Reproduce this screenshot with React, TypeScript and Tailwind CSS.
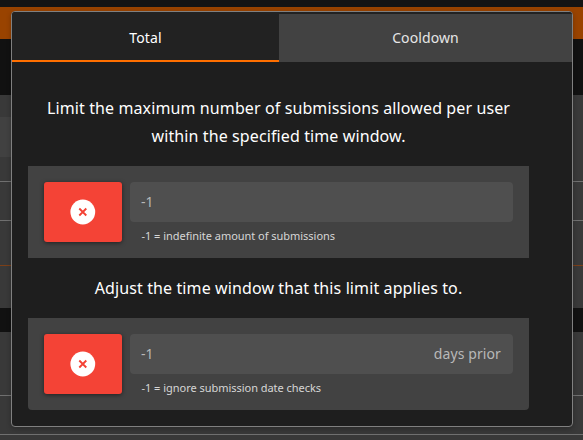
const stripes = [
  'h-[7px] bg-[#141414]',
  'h-8 bg-[#994300]',
  'h-14 bg-[#111111]',
  'h-[22px] bg-[#393939]',
  'h-10 bg-gradient-to-r from-[#414141] from-50% to-[#393939] to-50%',
  'h-6 bg-[#393939]',
  'h-px bg-[#707070]',
  'h-[38px] bg-[#393939]',
  'h-px bg-[#707070]',
  'h-11 bg-[#393939]',
  'h-px bg-[#7b3f18]',
  'h-[42px] bg-[#393939]',
  'h-6 bg-[#111111]',
  'h-[63px] bg-[#393939]',
  'h-px bg-[#707070]',
  'h-[38px] bg-[#393939]',
  'h-px bg-[#707070]',
  'h-[5px] bg-[#393939]',
];

function CancelIcon() {
  return (
    <svg width="26" height="26" viewBox="0 0 26 26" aria-hidden="true">
      <circle cx="12.8" cy="13" r="12.4" fill="#fff" />
      <path d="M9.3 9.5l7 7M16.3 9.5l-7 7" stroke="#f44336" strokeWidth="1.9" />
    </svg>
  );
}

function LimitField({ hint, suffix, last }: { hint: string; suffix?: string; last?: boolean }) {
  return (
    <div className={`flex h-[92px] gap-2 bg-[#424242] p-4 ${last ? 'rounded-b' : ''}`}>
      <button
        aria-label="Clear limit"
        className="flex h-[60px] w-[78px] shrink-0 items-center justify-center rounded-[3px] bg-[#f44336] shadow-[0_1px_4px_rgba(0,0,0,0.5)]"
      >
        <CancelIcon />
      </button>
      <div className="flex-1">
        <div className="flex h-10 items-center justify-between rounded bg-[#4f4f4f] pr-3 pl-[11px] text-sm tracking-[0.1px] text-[#b8b8b8]">
          <span>-1</span>
          {suffix && <span>{suffix}</span>}
        </div>
        <div className="pt-[5px] pl-[11.5px] text-[11px] leading-[18px] tracking-[-0.03px] text-[#d6d6d6]">{hint}</div>
      </div>
    </div>
  );
}

export default function App() {
  return (
    <div className="relative h-[440px] w-[583px] overflow-hidden font-['Noto_Sans',sans-serif]">
      <div className="flex flex-col">
        {stripes.map((s, i) => (
          <div key={i} className={s} />
        ))}
      </div>
      <div className="absolute top-[11px] left-[11px] h-[416px] w-[562px] overflow-hidden rounded border border-[#808080] bg-[#1e1e1e] shadow-[0_2px_5px_rgba(0,0,0,0.25)]">
        <div className="flex h-[50px] bg-[#222222] pt-0.5 text-sm tracking-[0.1px]">
          <div className="flex w-[267px] items-center justify-center border-b-2 border-[#ff6f00] pt-0.5 text-white">
            Total
          </div>
          <div className="flex flex-1 items-center justify-center bg-[#424242] text-[#e6e6e6]">Cooldown</div>
        </div>
        <div className="ml-4 flex w-[501px] flex-col gap-4 pt-8 text-white">
          <h2 className="text-center text-base leading-7 tracking-[0.11px]">
            Limit the maximum number of submissions allowed per user within the specified time window.
          </h2>
          <LimitField hint="-1 = indefinite amount of submissions" />
          <h2 className="text-center text-base leading-7 tracking-[0.11px]">Adjust the time window that this limit applies to.</h2>
          <LimitField hint="-1 = ignore submission date checks" suffix="days prior" last />
        </div>
      </div>
    </div>
  );
}
